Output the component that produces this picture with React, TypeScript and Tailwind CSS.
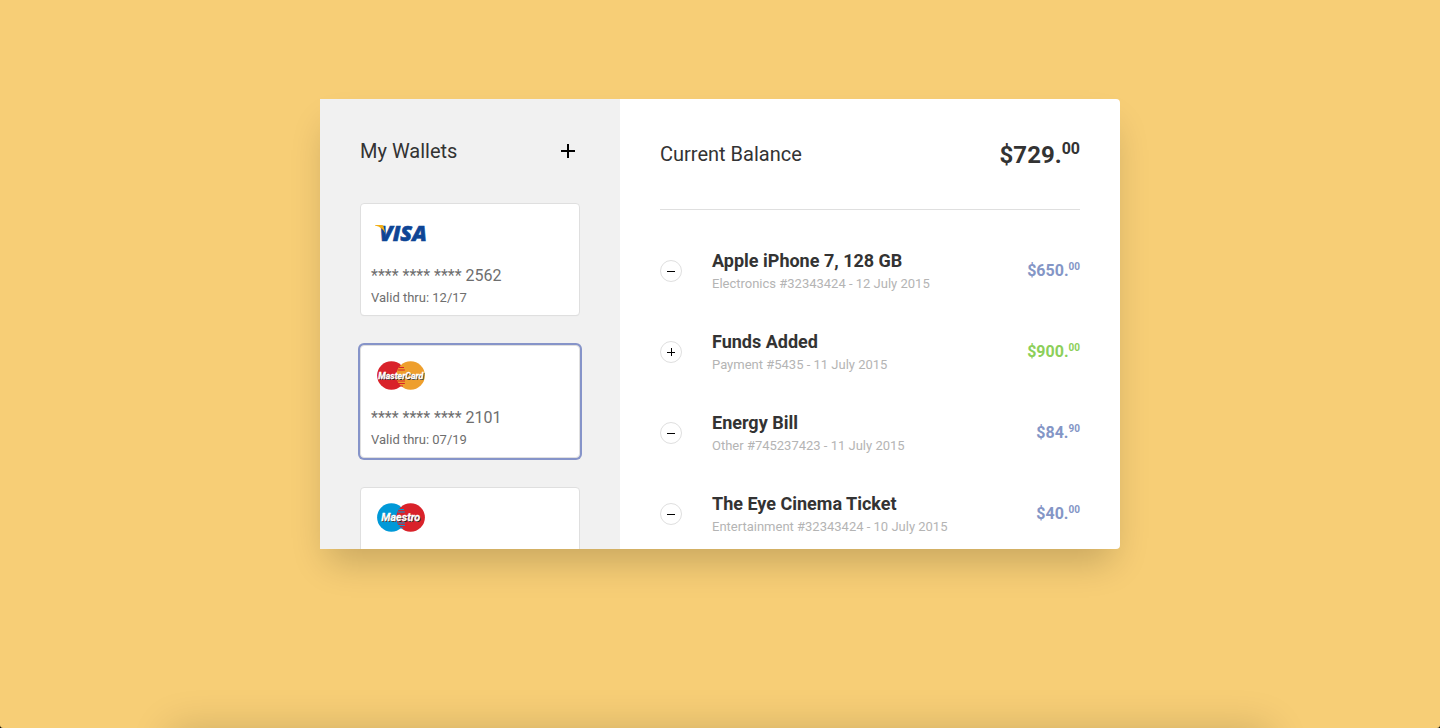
import { useState } from "react";

type Brand = "visa" | "mastercard" | "maestro";

interface Wallet {
  id: string;
  brand: Brand;
  last4: string;
  validThru: string;
}

interface Transaction {
  title: string;
  detail: string;
  whole: string;
  cents: string;
  credit: boolean;
}

const wallets: Wallet[] = [
  { id: "w1", brand: "visa", last4: "2562", validThru: "12/17" },
  { id: "w2", brand: "mastercard", last4: "2101", validThru: "07/19" },
  { id: "w3", brand: "maestro", last4: "", validThru: "" },
];

const transactions: Transaction[] = [
  { title: "Apple iPhone 7, 128 GB", detail: "Electronics #32343424 - 12 July 2015", whole: "$650.", cents: "00", credit: false },
  { title: "Funds Added", detail: "Payment #5435 - 11 July 2015", whole: "$900.", cents: "00", credit: true },
  { title: "Energy Bill", detail: "Other #745237423 - 11 July 2015", whole: "$84.", cents: "90", credit: false },
  { title: "The Eye Cinema Ticket", detail: "Entertainment #32343424 - 10 July 2015", whole: "$40.", cents: "00", credit: false },
];

function VisaLogo() {
  return (
    <svg width="60" height="40" viewBox="0 0 60 40" role="img" aria-label="Visa">
      <text
        x="8.5"
        y="27.8"
        fontFamily="'Open Sans', sans-serif"
        fontWeight="800"
        fontStyle="italic"
        fontSize="21.5"
        fill="#0e4595"
        stroke="#0e4595"
        strokeWidth="0.6"
      >
        VISA
      </text>
      <path d="M4 12 H10.6 Q12.2 12 12.6 13.4 L14.2 20 Q11.4 14 4 12.5 Z" fill="#f2ae14" />
    </svg>
  );
}

function CirclesLogo({ left, right, name, size }: { left: string; right: string; name: string; size: number }) {
  return (
    <svg width="60" height="40" viewBox="0 0 60 40" role="img" aria-label={name}>
      <circle cx="20.4" cy="20.5" r="14.3" fill={left} />
      <circle cx="39.6" cy="20.5" r="14.3" fill={right} />
      <path
        d="M28 12.5h5M26.8 15h7M26.4 26h7.6M26.8 28.5h7M28 31h4"
        stroke={left}
        strokeWidth="1.2"
      />
      <g
        fontFamily="'Liberation Sans Narrow', 'Roboto', sans-serif"
        fontWeight="700"
        fontStyle="italic"
        fontSize={size}
        textAnchor="middle"
      >
        <text x="30.5" y="24.7" fill="#222222">{name}</text>
        <text x="29.8" y="24" fill="#ffffff" stroke="#ffffff" strokeWidth="0.3">{name}</text>
      </g>
    </svg>
  );
}

function BrandLogo({ brand }: { brand: Brand }) {
  if (brand === "visa") return <VisaLogo />;
  if (brand === "mastercard")
    return <CirclesLogo left="#d9222a" right="#ee9f2d" name="MasterCard" size={8.8} />;
  return <CirclesLogo left="#0099d8" right="#d9222a" name="Maestro" size={10.8} />;
}

function WalletCard({ wallet, selected, onSelect }: { wallet: Wallet; selected: boolean; onSelect: () => void }) {
  return (
    <button
      type="button"
      aria-pressed={selected}
      onClick={onSelect}
      className={
        "flex h-[113px] w-full shrink-0 flex-col items-start justify-start rounded border border-[#dfdfdf] bg-white px-[10px] pt-[9px] text-left text-[#6e6e6e] " +
        (selected ? "ring-2 ring-[#8694c9]" : "shadow-[0_1px_1px_-1px_rgba(0,0,0,0.1)]")
      }
    >
      <BrandLogo brand={wallet.brand} />
      {wallet.last4 && (
        <>
          <span className="mt-[13px] block text-base leading-5">**** **** **** {wallet.last4}</span>
          <span className="mt-1 block text-[13px] leading-4">Valid thru: {wallet.validThru}</span>
        </>
      )}
    </button>
  );
}

function TransactionRow({ item }: { item: Transaction }) {
  return (
    <li className="flex items-start">
      <span className="mt-[11px] flex size-[22px] shrink-0 items-center justify-center rounded-full border border-[#dfdfdf]">
        <svg width="8" height="8" viewBox="0 0 8 8" shapeRendering="crispEdges" aria-hidden="true">
          <path d={item.credit ? "M0 4h8v1H0zM4 0h1v8H4z" : "M0 4h8v1H0z"} fill="#000000" />
        </svg>
      </span>
      <div className="ml-[30px] flex-1">
        <h3 className="text-lg leading-6 font-bold text-[#333333]">{item.title}</h3>
        <p className="mt-px text-[13px] leading-5 text-[#b4b4b4]">{item.detail}</p>
      </div>
      <p className={"mt-3 flex items-start text-base leading-5 font-bold " + (item.credit ? "text-[#8ccf5a]" : "text-[#8496c6]")}>
        {item.whole}
        <sup className="top-0 text-[10px] leading-3">{item.cents}</sup>
      </p>
    </li>
  );
}

export default function App() {
  const [selected, setSelected] = useState("w2");

  return (
    <div className="bg-black font-['Roboto',sans-serif]">
      <div className="flex min-h-screen flex-col items-center overflow-hidden rounded-b-[3px] bg-[#f7ce76] pt-[99px]">
        <main className="flex h-[450px] w-full max-w-[800px] overflow-hidden rounded-r bg-white shadow-[0_20px_35px_-8px_rgba(0,0,0,0.2)]">
          <section className="flex w-[300px] shrink-0 flex-col overflow-hidden bg-[#f1f1f1] px-10 pt-10" aria-label="Wallets">
            <header className="flex items-center justify-between">
              <h2 className="text-xl leading-6 text-[#333333]">My Wallets</h2>
              <button type="button" aria-label="Add wallet" className="flex size-6 items-center justify-center">
                <svg width="14" height="14" viewBox="0 0 14 14" shapeRendering="crispEdges" aria-hidden="true">
                  <path d="M0 6h14v2H0zM6 0h2v14H6z" fill="#000000" />
                </svg>
              </button>
            </header>
            <div className="mt-10 flex flex-col gap-[29px]">
              {wallets.map((w) => (
                <WalletCard key={w.id} wallet={w} selected={w.id === selected} onSelect={() => setSelected(w.id)} />
              ))}
            </div>
          </section>
          <section className="min-w-0 flex-1 overflow-hidden px-10 pt-10" aria-label="Transactions">
            <header className="flex justify-between border-b border-[#dfdfdf] pb-[38px]">
              <h2 className="text-xl leading-[30px] text-[#333333]">Current Balance</h2>
              <p className="flex items-start text-2xl leading-8 font-bold text-[#333333]">
                $729.
                <sup className="top-0 text-base leading-5">00</sup>
              </p>
            </header>
            <ul className="mt-[39px] flex flex-col gap-9">
              {transactions.map((t) => (
                <TransactionRow key={t.title} item={t} />
              ))}
            </ul>
          </section>
        </main>
        <div className="mt-auto -mb-20 h-20 w-full max-w-[1100px] bg-[#f7ce76] shadow-[0_0_40px_rgba(0,0,0,0.16)]" />
      </div>
    </div>
  );
}
